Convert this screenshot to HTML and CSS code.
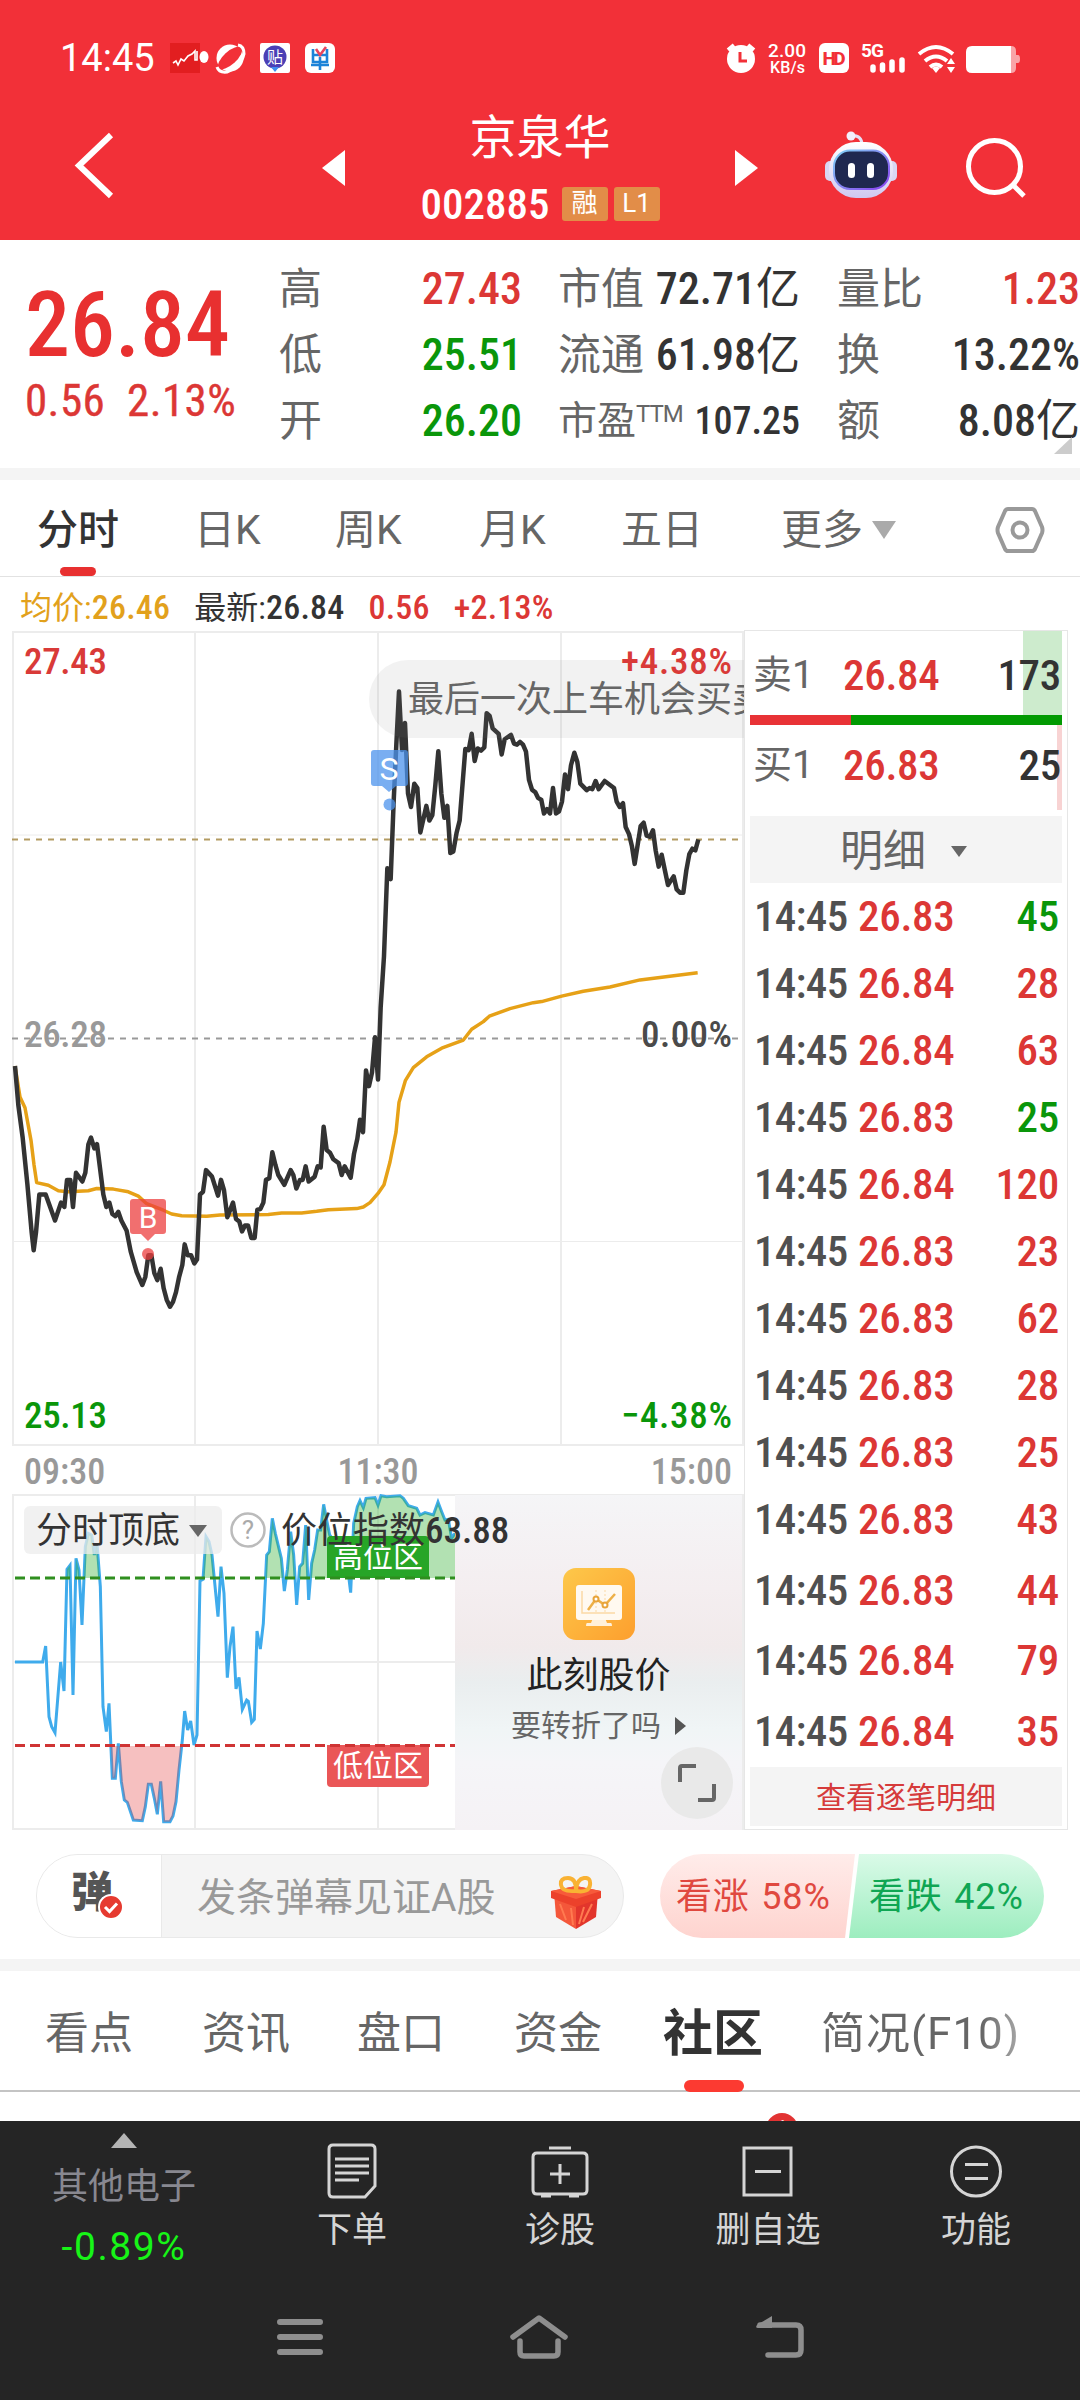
FILE: index.html
```html
<!DOCTYPE html>
<html lang="zh-CN">
<head>
    <meta charset="UTF-8">
    <meta name="viewport" content="width=device-width, initial-scale=1.0">
    <title>京泉华 002885</title>
    <link rel="stylesheet" href="styles.css">
</head>
<body>
    <header class="header">
        <div class="status-bar">
            <span class="clock">14:45</span>
            <svg class="status-left" width="166" height="32" viewBox="169 41 166 32">
                <rect x="170" y="42" width="30" height="30" fill="#e21e20"/>
                <path d="M173 62l3-2 2 4 3-6 3 2 4-5 4-2 3-3v9h2v-9" fill="none" stroke="#fff" stroke-width="1.6"/>
                <ellipse cx="204" cy="56" rx="4.500" ry="6" fill="#fff"/>
                <circle cx="230" cy="57" r="13.500" fill="#fff"/>
                <ellipse cx="230" cy="57" rx="15" ry="6.500" fill="#f23038" transform="rotate(-42 230 57)"/>
                <path d="M217 66q2 6 10 5q14-5 17-18q0-8-6-9" fill="none" stroke="#fff" stroke-width="3"/>
                <rect x="260" y="42" width="30" height="30" rx="2" fill="#fff"/>
                <circle cx="275" cy="56" r="11.500" fill="#4b3fb5"/>
                <path d="M271 66h8l-4 5z" fill="#3f8ef0"/>
                <text x="275" y="62" font-size="16" text-anchor="middle" fill="#fff">贴</text>
                <rect x="305" y="42" width="30" height="30" rx="6" fill="#fff"/>
                <g fill="none" stroke="#1c83d8" stroke-width="2.600">
                    <path d="M313 48v13h14v-13M320 56v13M311 64h18M313 54h14"/>
                    <path d="M316 48l4 6 6-8" stroke="#e8455d"/>
                </g>
            </svg>
            <svg class="status-right" width="296" height="34" viewBox="725 40 296 34">
                <circle cx="741" cy="58" r="14" fill="#fff"/>
                <path d="M728 49l6-5M754 49l-6-5" stroke="#fff" stroke-width="4" fill="none"/>
                <path d="M740 51v9h7" stroke="#f23038" stroke-width="3" fill="none"/>
                <text x="768" y="56" font-size="19" font-weight="500" textLength="38" fill="#fff">2.00</text>
                <text x="770" y="71.500" font-size="16" font-weight="500" textLength="35" fill="#fff">KB/s</text>
                <rect x="819" y="42" width="30" height="30" rx="6" fill="#fff"/>
                <text x="834" y="64" font-size="19" font-weight="800" text-anchor="middle" textLength="23" fill="#f23038">HD</text>
                <text x="861" y="56" font-size="19" font-weight="700" textLength="23" fill="#fff">5G</text>
                <path d="M873 66v3M882.500 64v5M892 61v8M902 59v10" stroke="#fff" stroke-width="5.500" stroke-linecap="round"/>
                <g fill="none" stroke="#fff" stroke-width="4">
                    <path d="M919 53q17-14 34 0"/>
                    <path d="M925 60q11-9 22 0"/>
                    <path d="M930 66q6-5 12 0"/>
                </g>
                <path d="M932 67q4-3 8 0l-4 5z" fill="#fff"/>
                <path d="M947 63l4-6 4 6zM947 66l4 6 4-6z" fill="#fff"/>
                <path d="M1008 45h3q5 0 5 5v4h2q2 0 2 4t-2 4h-2v5q0 5-5 5h-3z" fill="#f9a4a8"/>
                <path d="M972 45h39v27h-39q-6 0-6-6v-15q0-6 6-6z" fill="#fff"/>
            </svg>
        </div>
        <div class="title-bar">
            <svg class="back" width="44" height="72" viewBox="72 130 44 72"><path d="M111 135l-32 30.500 32 30.500" fill="none" stroke="#fff" stroke-width="6"/></svg>
            <svg class="prev" width="23" height="36" viewBox="0 0 23 36"><path d="M23 0v36l-23-18z" fill="#fff"/></svg>
            <div class="stock">
                <div class="stock-name">京泉华</div>
                <div class="stock-code">
                    <span class="num">002885</span>
                    <span class="badge">融</span>
                    <span class="badge">L1</span>
                </div>
            </div>
            <svg class="next" width="23" height="36" viewBox="0 0 23 36"><path d="M0 0v36l23-18z" fill="#fff"/></svg>
            <svg class="robot" width="74" height="70" viewBox="824 130 74 70">
                <defs>
                    <linearGradient id="head" x1="0" y1="0" x2="0" y2="1">
                        <stop offset="0" stop-color="#fff"/>
                        <stop offset="1" stop-color="#cfc8f0"/>
                    </linearGradient>
                    <linearGradient id="face" x1="0" y1="0" x2="1" y2="1">
                        <stop offset="0" stop-color="#7fd3f5"/>
                        <stop offset="1" stop-color="#8a3ff0"/>
                    </linearGradient>
                </defs>
                <path d="M851 136q9-2 11 7" fill="none" stroke="#e6e0f5" stroke-width="3"/>
                <circle cx="851" cy="136" r="4.500" fill="#f3effc"/>
                <rect x="825" y="161" width="12" height="20" rx="5" fill="#d9d6f3"/>
                <rect x="885" y="161" width="12" height="20" rx="5" fill="#d9d6f3"/>
                <rect x="829" y="142" width="64" height="56" rx="27" fill="url(#head)"/>
                <rect x="834" y="150.500" width="55" height="38.500" rx="16" fill="#1f2850" stroke="url(#face)" stroke-width="2"/>
                <rect x="848" y="163" width="7" height="15" rx="3.500" fill="#fff"/>
                <rect x="867" y="163" width="7" height="15" rx="3.500" fill="#fff"/>
            </svg>
            <svg class="search" width="62" height="62" viewBox="964 136 62 62"><g fill="none" stroke="#fff" stroke-width="5"><circle cx="994.500" cy="166.500" r="26"/><path d="M1013 185l11 11"/></g></svg>
        </div>
    </header>

    <section class="quote">
        <div class="quote-price red">
            <div class="big">26.84</div>
            <div class="change"><span>0.56</span><span>2.13%</span></div>
        </div>
        <dl class="quote-col col-a">
            <dt>高</dt><dd class="red">27.43</dd>
            <dt>低</dt><dd class="green">25.51</dd>
            <dt>开</dt><dd class="green">26.20</dd>
        </dl>
        <dl class="quote-col col-b">
            <dt>市值</dt><dd>72.71<i>亿</i></dd>
            <dt>流通</dt><dd>61.98<i>亿</i></dd>
            <dt class="small">市盈<sup>TTM</sup></dt><dd class="small">107.25</dd>
        </dl>
        <dl class="quote-col col-c">
            <dt>量比</dt><dd class="red">1.23</dd>
            <dt>换</dt><dd>13.22%</dd>
            <dt>额</dt><dd>8.08<i>亿</i></dd>
        </dl>
        <span class="corner"></span>
    </section>

    <nav class="period-tabs">
        <span class="active">分时</span>
        <span>日K</span>
        <span>周K</span>
        <span>月K</span>
        <span>五日</span>
        <span class="more">更多<i></i></span>
        <svg width="50" height="48" viewBox="0 0 50 48"><g fill="none" stroke="#999" stroke-width="4"><path d="M13 3h24q2 0 3 2l7 16q1 3 0 6l-7 16q-1 2-3 2h-24q-2 0-3-2l-7-16q-1-3 0-6l7-16q1-2 3-2z"/><circle cx="25" cy="24" r="7.500"/></g></svg>
    </nav>

    <main class="board">
        <div class="charts">
            <div class="legend">
                <span class="avg">均价:<b>26.46</b></span>
                <span>最新:<b>26.84</b></span>
                <b class="red">0.56</b>
                <b class="red">+2.13%</b>
            </div>

            <!-- minute price chart -->
            <svg class="price-chart" width="744" height="815" viewBox="0 631 744 815">
                <g fill="none" stroke="#ececec" stroke-width="2">
                    <rect x="13" y="632" width="730" height="813"/>
                    <path d="M195 632v813M378 632v813M561 632v813"/>
                    <path d="M13 835h730M13 1241.500h730" stroke-width="1"/>
                </g>
                <path d="M12 839.500h731" stroke="#b39b62" stroke-width="2" stroke-dasharray="6 6"/>
                <path d="M12 1038.500h731" stroke="#999" stroke-width="2" stroke-dasharray="6 6"/>
                <g transform="translate(0 620) scale(.33333 .542)" fill="none" stroke-linejoin="round">
                    <polyline vector-effect="non-scaling-stroke" stroke="#e6a117" stroke-width="3.500" points="45,823 60,880 75,900 93,960 102,1005 110,1038 145,1043 175,1053 205,1055 265,1053 290,1049 340,1050 385,1055 415,1063 440,1077 490,1089 515,1096 545,1099 620,1100 660,1098 805,1097 845,1094 905,1094 950,1091 985,1088 1070,1086 1090,1083 1110,1075 1134,1058 1152,1042 1170,1000 1188,945 1197,890 1216,850 1240,826 1280,806 1325,790 1390,775 1415,755 1450,741 1468,731 1530,717 1600,706 1625,704 1685,694 1750,685 1830,677 1920,664 2093,651"/>
                    <polyline vector-effect="non-scaling-stroke" stroke="#333" stroke-width="4.500" points="45,823 55,895 68,955 82,1040 95,1130 101,1163 108,1130 118,1060 137,1060 165,1108 183,1075 193,1083 201,1033 211,1033 219,1083 228,1020 247,1036 256,1020 265,968 273,955 283,975 291,967 310,1060 319,1083 328,1075 337,1096 346,1100 355,1092 364,1108 380,1127 392,1165 410,1203 427,1227 436,1212 445,1172 454,1172 463,1205 472,1218 482,1197 491,1233 500,1254 510,1267 519,1258 528,1240 537,1213 547,1190 554,1152 563,1172 573,1172 583,1187 591,1180 600,1060 609,1055 618,1015 636,1027 654,1062 663,1033 672,1052 682,1102 699,1075 708,1105 718,1110 726,1128 735,1117 744,1117 754,1140 764,1140 772,1088 781,1087 790,1075 798,1033 808,1030 817,982 826,1005 835,1024 853,1042 872,1015 880,1024 889,1049 900,1033 908,1033 917,1008 926,1036 944,1027 953,1008 962,1010 971,935 980,978 990,983 1000,995 1016,1002 1025,1024 1034,1008 1052,1029 1062,985 1072,957 1080,922 1089,945 1098,831 1107,860 1116,835 1125,770 1134,848 1142,715 1152,620 1162,458 1172,478 1181,335 1189,230 1197,132 1206,240 1215,190 1224,320 1233,345 1243,302 1252,310 1261,392 1279,343 1288,370 1297,360 1306,305 1315,242 1324,320 1333,365 1342,343 1351,430 1360,427 1370,392 1379,370 1388,300 1396,238 1406,240 1415,210 1424,260 1433,237 1443,241 1453,235 1460,172 1469,177 1478,200 1496,210 1505,248 1514,220 1533,212 1542,228 1551,230 1560,225 1569,230 1578,243 1587,295 1596,313 1606,318 1614,328 1624,332 1632,357 1641,349 1650,357 1659,310 1668,357 1677,353 1686,335 1695,285 1704,312 1713,268 1723,245 1732,262 1741,302 1760,314 1769,310 1777,312 1787,297 1796,312 1814,297 1842,310 1850,335 1859,345 1869,338 1877,382 1887,395 1896,418 1904,450 1913,415 1922,380 1931,374 1940,398 1950,400 1959,388 1967,425 1976,455 1985,433 1994,460 2004,489 2021,473 2030,497 2040,503 2050,503 2059,462 2068,432 2077,422 2086,425 2095,405"/>
                </g>
                <rect x="369" y="660" width="440" height="78" rx="39" fill="#808080" fill-opacity=".1"/>
                <text class="cjk" x="408" y="712" font-size="36" fill="#666">最后一次上车机会买卖</text>
                <g class="num" font-size="37">
                    <text x="24" y="674" textLength="83" fill="#d93a38">27.43</text>
                    <text x="24" y="1047" textLength="83" fill="#999">26.28</text>
                    <text x="24" y="1428" textLength="83" fill="#0a960a">25.13</text>
                    <text x="621" y="674" textLength="111" fill="#d93a38">+4.38%</text>
                    <text x="641" y="1047" textLength="91" fill="#4a4a4a">0.00%</text>
                    <text x="621" y="1428" textLength="111" fill="#0a960a">−4.38%</text>
                </g>
                <!-- trade markers -->
                <g fill="#4c93ec" fill-opacity=".75">
                    <path d="M374 750h31q3 0 3 3v30q0 3-3 3h-9l-7 6-7-6h-8q-3 0-3-3v-30q0-3 3-3z"/>
                    <circle cx="389.500" cy="804.500" r="6"/>
                </g>
                <g fill="#ec3f3f" fill-opacity=".75">
                    <path d="M133 1199h30q3 0 3 3v29q0 3-3 3h-8l-7 7-7-7h-8q-3 0-3-3v-29q0-3 3-3z"/>
                    <circle cx="148" cy="1254" r="6"/>
                </g>
                <text x="389" y="780" font-size="32" text-anchor="middle" fill="#fff">S</text>
                <text x="148" y="1228" font-size="30" text-anchor="middle" fill="#fff">B</text>
            </svg>

            <div class="time-axis num"><span>09:30</span><span>11:30</span><span>15:00</span></div>

            <div class="sub-row">
                <!-- top/bottom index chart -->
                <svg class="index-chart" width="455" height="336" viewBox="0 1494 455 336">
                    <defs>
                        <clipPath id="above"><rect x="0" y="0" width="1365" height="294"/></clipPath>
                        <clipPath id="below"><rect x="0" y="798" width="1365" height="300"/></clipPath>
                        <polyline id="idx" points="45,546 128,546 137,498 147,710 155,740 165,758 182,546 192,633 201,268 210,256 219,645 228,235 237,270 246,435 256,200 265,160 275,165 283,225 291,190 301,320 309,680 319,755 327,670 337,895 346,895 355,790 364,905 373,960 382,967 400,1020 427,1022 436,980 445,913 454,913 463,955 472,1003 482,904 491,1025 510,1025 519,1008 528,965 537,870 547,780 554,693 563,750 572,723 582,795 591,765 600,303 609,298 618,170 627,185 636,225 654,410 663,260 672,340 682,593 690,500 699,440 708,627 717,592 727,688 740,660 745,664 755,727 763,718 771,453 781,507 790,430 800,225 808,215 817,115 826,160 844,235 853,333 862,270 872,155 881,225 890,375 899,260 908,250 917,135 926,360 935,250 944,210 953,150 962,150 971,73 980,120 989,165 1000,180 1010,190 1024,260 1040,240 1052,338 1061,130 1072,80 1080,62 1090,83 1098,55 1125,53 1134,75 1143,47 1160,50 1200,47 1210,55 1225,77 1250,85 1260,105 1275,98 1300,105 1314,66 1325,95 1335,120 1345,118 1355,175 1365,160"/>
                    </defs>
                    <g fill="none" stroke="#ececec" stroke-width="2">
                        <path d="M455 1495h-442v334h442M195 1495v334M378 1495v334M13 1662h442"/>
                    </g>
                    <g transform="translate(0 1480) scale(.33333)">
                        <use href="#idx" fill="none" stroke="#3fabec" stroke-width="9"/>
                        <g clip-path="url(#above)" fill="#2fae2f" fill-opacity=".37">
                            <polygon points="192,633 201,268 210,256 219,645 228,235 237,270 246,435 256,200 265,160 275,165 283,225 291,190 301,320"/>
                            <polygon points="600,303 609,298 618,170 627,185 636,225 654,410 663,260 672,340"/>
                            <polygon points="790,430 800,225 808,215 817,115 826,160 844,235 853,333 862,270 872,155 881,225 890,375 899,260 908,250 917,135 926,360 935,250 944,210 953,150 962,150 971,73 980,120 989,165 1000,180 1010,190 1024,260 1040,240 1052,338 1061,130 1072,80 1080,62 1090,83 1098,55 1125,53 1134,75 1143,47 1160,50 1200,47 1210,55 1225,77 1250,85 1260,105 1275,98 1300,105 1314,66 1325,95 1335,120 1345,118 1355,175 1365,160 1365,430"/>
                        </g>
                        <g clip-path="url(#below)" fill="#e43c3c" fill-opacity=".32">
                            <polygon points="327,670 337,895 346,895 355,790 364,905 373,960 382,967 400,1020 427,1022 436,980 445,913 454,913 463,955 472,1003 482,904 491,1025 510,1025 519,1008 528,965 537,870 547,780 554,693"/>
                        </g>
                    </g>
                    <path d="M327 1578v-38q0-4 4-4h94q4 0 4 4v38z" fill="#27a527"/>
                    <path d="M327 1745v38q0 4 4 4h94q4 0 4-4v-38z" fill="#ea5657"/>
                    <path d="M15 1578h440" stroke="#2f8f1f" stroke-width="3" stroke-dasharray="10 5"/>
                    <path d="M15 1745.500h440" stroke="#cf3434" stroke-width="3" stroke-dasharray="10 5"/>
                    <g class="cjk" font-size="30" fill="#fff" text-anchor="middle">
                        <text x="378" y="1567">高位区</text>
                        <text x="378" y="1776">低位区</text>
                    </g>
                </svg>

                <div class="promo">
                    <svg width="72" height="72" viewBox="0 0 72 72">
                        <defs>
                            <linearGradient id="gold" x1="0" y1="0" x2="1" y2="1">
                                <stop offset="0" stop-color="#fdc84a"/>
                                <stop offset="1" stop-color="#fd9f2e"/>
                            </linearGradient>
                        </defs>
                        <rect width="72" height="72" rx="13" fill="url(#gold)"/>
                        <path d="M30 50h12l2 5h4q1 0 1 3h-26q0-3 1-3h4z" fill="#fff0d8"/>
                        <rect x="13" y="17" width="46" height="35" rx="3" fill="#fff9f0"/>
                        <path d="M19 23v22h33" fill="none" stroke="#fbd9a5" stroke-width="1.500"/>
                        <path d="M33 22v22M42 22v22" stroke="#fbd9a5" stroke-width="1" stroke-dasharray="2 2"/>
                        <path d="M25 42l8-11 9 6 10-11" fill="none" stroke="#edb048" stroke-width="2.500"/>
                        <circle cx="33" cy="31" r="2.500" fill="#fff" stroke="#e8a43a" stroke-width="2"/>
                        <circle cx="42" cy="37" r="2.500" fill="#fff" stroke="#e8a43a" stroke-width="2"/>
                    </svg>
                    <div class="promo-title">此刻股价</div>
                    <div class="promo-sub">要转折了吗<i></i></div>
                    <div class="expand">
                        <svg width="38" height="38" viewBox="0 0 38 38"><path d="M2 18v-14q0-2 2-2h14M36 20v14q0 2-2 2h-14" fill="none" stroke="#666" stroke-width="4"/></svg>
                    </div>
                </div>

                <div class="index-head">
                    <span class="chip">分时顶底<i></i></span>
                    <svg width="36" height="36" viewBox="0 0 36 36"><circle cx="18" cy="18" r="16.500" fill="none" stroke="#bbb" stroke-width="2.500"/><text x="18" y="27" font-size="26" text-anchor="middle" fill="#aaa">?</text></svg>
                    <span class="index-name">价位指数<b>63.88</b></span>
                </div>
            </div>
        </div>

        <aside class="depth">
            <div class="level ask"><span>卖1</span><b class="red">26.84</b><b>173</b></div>
            <div class="ratio"></div>
            <div class="level bid"><span>买1</span><b class="red">26.83</b><b>25</b></div>
            <div class="detail-head">明细<i></i></div>
            <ul class="ticks" id="ticks"></ul>
            <a class="all-ticks">查看逐笔明细</a>
        </aside>
    </main>

    <section class="danmu">
        <div class="danmu-input">
            <div class="danmu-switch">弹
                <svg width="26" height="26" viewBox="0 0 26 26"><circle cx="13" cy="13" r="12" fill="#e63a30" stroke="#fff" stroke-width="2"/><path d="M7 13l4.500 4.500 7.500-8" fill="none" stroke="#fff" stroke-width="3"/></svg>
            </div>
            <span class="placeholder">发条弹幕见证A股</span>
            <svg class="gift" width="50" height="54" viewBox="0 0 50 54">
                <path d="M3 16l22 8v29l-20-12z" fill="#f4573a"/>
                <path d="M47 16l-22 8v29l20-12z" fill="#e2352c"/>
                <path d="M0 15l25-5 25 5v7l-25 9-25-9z" fill="#ec412b"/>
                <path d="M0 15l25-5 25 5-25 8z" fill="#f75a3a"/>
                <path d="M9 28l6 16M20 32l2 17M41 28l-9 18M33 31l-5 17" stroke="#ff7a50" stroke-width="2"/>
                <path d="M24 15q-13 1-14-6t7-7 8 12q1-11 8-12t6 7-14 6z" fill="none" stroke="#f9b233" stroke-width="4"/>
            </svg>
        </div>
        <div class="vote">
            <span class="up">看涨 58%</span>
            <span class="down">看跌 42%</span>
        </div>
    </section>

    <nav class="info-tabs">
        <span>看点</span>
        <span>资讯</span>
        <span>盘口</span>
        <span>资金</span>
        <span class="active">社区</span>
        <span class="fade">简况(F10)</span>
    </nav>
    <div class="feed"><span class="dot">1</span></div>

    <footer class="footer">
        <div class="toolbar">
            <div class="sector">
                <i></i>
                <span>其他电子</span>
                <em>-0.89%</em>
            </div>
            <div class="tool">
                <svg width="60" height="58" viewBox="0 0 60 58"><g fill="none" stroke="#d5d5d5" stroke-width="3"><path d="M11 3h38q4 0 4 4v37l-10 11h-32q-4 0-4-4v-44q0-4 4-4z"/><path d="M13 17h34M13 24h34M13 31h34M13 38h24"/></g></svg>
                <span>下单</span>
            </div>
            <div class="tool">
                <svg width="60" height="58" viewBox="0 0 60 58"><g fill="none" stroke="#d5d5d5" stroke-width="3"><path d="M19 6h22M7 11h46q4 0 4 4v33q0 4-4 4h-46q-4 0-4-4v-33q0-4 4-4zM30 22v20M20 32h20M11 54h10M39 54h10"/></g></svg>
                <span>诊股</span>
            </div>
            <div class="tool">
                <svg width="60" height="58" viewBox="0 0 60 58"><g fill="none" stroke="#d5d5d5" stroke-width="3"><path d="M6 6h47v47h-47zM17 29.500h26"/></g></svg>
                <span>删自选</span>
            </div>
            <div class="tool">
                <svg width="60" height="58" viewBox="0 0 60 58"><g fill="none" stroke="#d5d5d5" stroke-width="3"><circle cx="30" cy="29.500" r="24.500"/><path d="M19 22.500h23M19 36.500h23"/></g></svg>
                <span>功能</span>
            </div>
        </div>
        <div class="sys-nav">
            <svg width="46" height="38" viewBox="0 0 46 38"><path d="M3 4h40M3 19h40M3 34h40" stroke="#8e8e8e" stroke-width="6" stroke-linecap="round"/></svg>
            <svg width="60" height="46" viewBox="0 0 60 46"><path d="M4 23l26-19 26 19M11 27v11q0 4 4 4h30q4 0 4-4v-11" fill="none" stroke="#8e8e8e" stroke-width="5.500" stroke-linecap="round" stroke-linejoin="round"/></svg>
            <svg width="50" height="44" viewBox="0 0 50 44"><path d="M17 1l-15 9q-2 3 1 3h14z" fill="#8e8e8e"/><path d="M5 10h36q5 0 5 5v20q0 5-5 5h-28" fill="none" stroke="#8e8e8e" stroke-width="5.500" stroke-linecap="round"/></svg>
        </div>
    </footer>

    <script>
        // [price, volume, side]
        const ticks = [
            ["26.83", 45, "green"],
            ["26.84", 28, "red"],
            ["26.84", 63, "red"],
            ["26.83", 25, "green"],
            ["26.84", 120, "red"],
            ["26.83", 23, "red"],
            ["26.83", 62, "red"],
            ["26.83", 28, "red"],
            ["26.83", 25, "red"],
            ["26.83", 43, "red"],
            ["26.83", 44, "red"],
            ["26.84", 79, "red"],
            ["26.84", 35, "red"]
        ];

        document.getElementById("ticks").innerHTML = ticks.map(([price, volume, side]) => `
            <li><span>14:45</span><b class="red">${price}</b><b class="${side}">${volume}</b></li>
        `).join("");
    </script>
</body>
</html>
```
FILE: styles.css
```css
* {
    box-sizing: border-box;
}
body {
    margin: 0;
    width: 1080px;
    height: 2400px;
    overflow: hidden;
    display: flex;
    flex-direction: column;
    background: #fff;
    color: #333;
    font-family: Roboto, "Noto Sans CJK SC", sans-serif;
    line-height: 1;
}
svg {
    display: block;
    flex: none;
}
b, .num, dd {
    font-family: "Roboto Condensed", Roboto, "Noto Sans CJK SC", sans-serif;
    font-weight: 500;
}
i, em {
    font-style: normal;
}
.cjk {
    font-family: "Noto Sans CJK SC", sans-serif;
}
.red {
    color: #dc3735;
}
.green {
    color: #0a960a;
}

/* header */
.header {
    height: 240px;
    flex: none;
    background: #f23038;
    color: #fff;
}
.status-bar {
    height: 114px;
    padding: 1px 59px 0 60px;
    display: flex;
    align-items: center;
}
.clock {
    width: 109px;
    font-size: 38px;
}
.status-right {
    margin-left: auto;
    overflow: visible;
}
.title-bar {
    height: 126px;
    display: flex;
    align-items: flex-start;
}
.back {
    margin: 16px 206px 0 72px;
}
.prev, .next {
    margin-top: 36px;
}
.stock {
    width: 390px;
    text-align: center;
}
.stock-name {
    font-size: 47px;
    line-height: 48px;
}
.stock-code {
    display: flex;
    justify-content: center;
    align-items: center;
    gap: 6px;
    height: 34px;
    margin-top: 25px;
    font-size: 43px;
}
.stock-code .num {
    margin-right: 6px;
}
.badge {
    width: 46px;
    height: 34px;
    line-height: 33px;
    border-radius: 3px;
    background: #e28d48;
    font-size: 26px;
}
.robot {
    margin: 16px 66px 0 66px;
}
.search {
    margin-top: 22px;
}

/* quote */
.quote {
    position: relative;
    height: 240px;
    flex: none;
    display: flex;
    padding: 16px 0 0 25px;
    border-bottom: 12px solid #f4f4f4;
}
.quote-price {
    width: 254px;
    flex: none;
    font-family: "Roboto Condensed", Roboto, sans-serif;
    font-weight: 500;
}
.big {
    margin-top: 25px;
    font-size: 90px;
    color: #e83030;
}
.change {
    display: flex;
    gap: 22px;
    margin-top: 7px;
    font-size: 45px;
    font-weight: 400;
    letter-spacing: .4px;
    -webkit-text-stroke: .4px;
}
.quote-col {
    flex: none;
    display: grid;
    grid-template-columns: auto 1fr;
    grid-auto-rows: 66px;
    align-items: center;
    margin: 0;
    font-size: 43px;
}
.quote-col dt {
    color: #666;
    white-space: nowrap;
}
.quote-col dd {
    margin: 0;
    text-align: right;
    white-space: nowrap;
    font-size: 44px;
}
.quote-col dd i {
    font-weight: 400;
    font-size: 44px;
}
.quote-col .small {
    font-size: 39px;
}
.quote-col dd.small {
    font-size: 38px;
}
.col-a {
    width: 243px;
}
.col-b {
    width: 242px;
    margin-left: 36px;
}
/* labels keep their own width so the TTM row does not push the values */
.col-b {
    grid-template-columns: 84px 1fr;
}
.col-c {
    width: 243px;
    margin-left: 37px;
}
.quote-col sup {
    font-size: 24px;
    letter-spacing: -1px;
    vertical-align: 12px;
    line-height: 0;
}
.corner {
    position: absolute;
    right: 8px;
    bottom: 14px;
    border: solid transparent;
    border-width: 0 0 17px 18px;
    border-bottom-color: #ccc;
}

/* period tabs */
.period-tabs {
    height: 97px;
    flex: none;
    display: grid;
    grid-template-columns: 157px 141px 144px 142px 160px 214px auto;
    align-items: center;
    padding: 4px 0 0 37px;
    border-bottom: 1px solid #e2e2e2;
    font-size: 41px;
    color: #666;
}
.period-tabs .active {
    position: relative;
    color: #333;
    font-weight: 500;
}
.period-tabs .active::after {
    content: "";
    position: absolute;
    left: 23px;
    top: 57px;
    width: 36px;
    height: 9px;
    border-radius: 5px;
    background: #e83030;
}
.more {
    display: flex;
    align-items: center;
    gap: 9px;
}
.more i {
    border: solid transparent;
    border-width: 18px 12px 0;
    border-top-color: #aaa;
}

/* charts */
.board {
    height: 1253px;
    flex: none;
    display: flex;
}
.charts {
    width: 744px;
    flex: none;
}
.legend {
    height: 54px;
    padding: 5px 0 0 20px;
    display: flex;
    align-items: center;
    gap: 24px;
    font-size: 32px;
}
.legend b {
    font-size: 34px;
    letter-spacing: .2px;
}
.avg {
    color: #e2a11c;
}
.price-chart, .index-chart {
    font-family: Roboto, "Noto Sans CJK SC", sans-serif;
}
.time-axis {
    height: 48px;
    padding: 4px 12px 0 24px;
    display: flex;
    align-items: center;
    justify-content: space-between;
    font-size: 36px;
    color: #999;
}
.sub-row {
    position: relative;
    display: flex;
    height: 336px;
}
.promo {
    position: relative;
    width: 289px;
    padding-top: 73px;
    display: flex;
    flex-direction: column;
    align-items: center;
    background: linear-gradient(180deg, #f5f5f7 0%, #f4eef0 28%, #f1eaeb 45%, #eaeeef 56%, #f0f5f6 70%, #f5f5f8 80%, #f5f2f5 100%);
    border: solid #ececec;
    border-width: 1px 2px 0 0;
}
.promo-title {
    margin-top: 18px;
    font-size: 36px;
    color: #222;
}
.promo-sub {
    display: flex;
    align-items: center;
    gap: 14px;
    margin-top: 17px;
    font-size: 30px;
    color: #666;
}
.promo-sub i {
    border: solid transparent;
    border-width: 9px 0 9px 11px;
    border-left-color: #555;
}
.expand {
    position: absolute;
    right: 9px;
    bottom: 11px;
    width: 72px;
    height: 72px;
    border-radius: 50%;
    background: #e9e9e9;
    display: flex;
    align-items: center;
    justify-content: center;
}
.index-head {
    position: absolute;
    left: 24px;
    top: 12px;
    display: flex;
    align-items: center;
}
.chip {
    display: flex;
    align-items: center;
    gap: 9px;
    width: 198px;
    height: 48px;
    margin-right: 8px;
    padding: 2px 0 0 12px;
    border-radius: 6px;
    background: rgba(236, 236, 236, .75);
    font-size: 36px;
}
.chip i {
    border: solid transparent;
    border-width: 12px 9px 0;
    border-top-color: #666;
}
.index-name {
    margin-left: 15px;
    font-size: 36px;
}
.index-name b {
    font-size: 37px;
}

/* depth */
.depth {
    width: 324px;
    height: 1200px;
    margin-top: 53px;
    border: 1px solid #e6e6e6;
    padding: 0 5px;
}
.level {
    display: grid;
    grid-template-columns: 90px auto 1fr;
    align-items: center;
    height: 85px;
    padding: 4px 1px 0 3px;
    font-size: 38px;
    color: #333;
}
.level span {
    color: #666;
    font-size: 39px;
    white-space: nowrap;
}
.level b {
    font-size: 43px;
    letter-spacing: -.3px;
}
.level b:last-child {
    text-align: right;
}
.ask {
    background: linear-gradient(#cdebcd, #cdebcd) right / 39px 100% no-repeat;
    height: 84px;
}
.ratio {
    height: 10px;
    background: linear-gradient(90deg, #e83236 101px, #029a02 101px);
}
.bid {
    background: linear-gradient(#f8d3d3, #f8d3d3) right / 5px 100% no-repeat;
    padding-bottom: 8px;
}
.detail-head {
    display: flex;
    align-items: center;
    justify-content: center;
    gap: 25px;
    height: 67px;
    margin-top: 6px;
    padding: 3px 5px 0 0;
    background: #f4f4f4;
    font-size: 43px;
    color: #666;
}
.detail-head i {
    border: solid transparent;
    border-width: 11px 8px 0;
    border-top-color: #666;
}
.ticks {
    list-style: none;
    margin: 0;
    padding: 0;
}
.ticks li {
    display: grid;
    grid-template-columns: 104px auto 1fr;
    align-items: center;
    height: 67px;
    padding: 0 3px 0 4px;
    font-size: 43px;
    letter-spacing: -.3px;
}
.ticks li:nth-child(n+11) {
    height: 71px;
}
.ticks li:nth-child(11) {
    height: 72px;
    padding-top: 3px;
}
.ticks span {
    font-family: "Roboto Condensed", Roboto, sans-serif;
    font-weight: 500;
    letter-spacing: -.7px;
    color: #505050;
}
.ticks b:last-child {
    text-align: right;
}
.all-ticks {
    display: block;
    height: 59px;
    line-height: 61px;
    background: #f4f4f4;
    text-align: center;
    font-size: 30px;
    color: #d63b3b;
}

/* comments */
.danmu {
    height: 141px;
    flex: none;
    display: flex;
    align-items: flex-start;
    padding: 24px 36px 0;
    border-bottom: 12px solid #f4f4f4;
}
.danmu-input {
    display: flex;
    align-items: center;
    width: 588px;
    height: 84px;
    border: 1px solid #e9e9e9;
    border-radius: 42px;
    background: #f4f4f4;
    overflow: hidden;
}
.danmu-switch {
    position: relative;
    width: 125px;
    height: 84px;
    padding-left: 34px;
    line-height: 78px;
    background: #fff;
    border-right: 1px solid #e9e9e9;
    font-size: 42px;
    font-weight: 900;
    color: #555;
}
.danmu-switch svg {
    position: absolute;
    left: 61px;
    top: 40px;
}
.placeholder {
    width: 353px;
    padding: 4px 0 0 35px;
    font-size: 39px;
    color: #999;
    white-space: nowrap;
}
.gift {
    margin: 13px 0 0 36px;
}
.vote {
    width: 384px;
    height: 84px;
    margin-left: 36px;
    display: flex;
    border-radius: 42px;
    overflow: hidden;
    font-size: 36px;
    letter-spacing: .8px;
    word-spacing: 2px;
    line-height: 86px;
}
.up {
    width: 195px;
    padding-left: 16px;
    background: linear-gradient(#ffecea, #fed4cf);
    clip-path: polygon(0 0, 100% 0, calc(100% - 10px) 100%, 0 100%);
    color: #e0483f;
}
.down {
    width: 195px;
    margin-left: -6px;
    padding-left: 20px;
    background: linear-gradient(#dafae8, #9dedbf);
    clip-path: polygon(10px 0, 100% 0, 100% 100%, 0 100%);
    color: #0fa653;
}

/* info tabs */
.info-tabs {
    height: 121px;
    flex: none;
    display: grid;
    grid-template-columns: 157px 155px 157px 149px 158px auto;
    align-items: center;
    padding: 6px 0 0 45px;
    border-bottom: 2px solid #c4c4c4;
    font-size: 44px;
    color: #666;
}
.info-tabs .active {
    position: relative;
    font-size: 50px;
    font-weight: 700;
    color: #333;
}
.info-tabs .active::after {
    content: "";
    position: absolute;
    left: 21px;
    top: 71px;
    width: 60px;
    height: 12px;
    border-radius: 6px;
    background: #fc3a31;
}
.fade {
    background: linear-gradient(90deg, #666 160px, #aaa 200px);
    background-clip: text;
    -webkit-background-clip: text;
    color: transparent;
    letter-spacing: 1px;
}
.feed {
    height: 29px;
    flex: none;
    padding: 21px 0 0 766px;
    overflow: hidden;
}
.dot {
    display: block;
    width: 32px;
    height: 32px;
    border-radius: 50%;
    background: #e23333;
    color: #fff;
    font-size: 22px;
    line-height: 32px;
    text-align: center;
}

/* footer */
.footer {
    flex: 1;
    background: #252525;
}
.toolbar {
    display: flex;
    height: 153px;
}
.sector {
    width: 248px;
    display: flex;
    flex-direction: column;
    align-items: center;
    padding-top: 12px;
    font-size: 36px;
    color: #888890;
}
.sector i {
    border: solid transparent;
    border-width: 0 13px 15px;
    border-bottom-color: #b5b5b5;
}
.sector span {
    margin-top: 21px;
}
.sector em {
    margin-top: 23px;
    font-size: 39px;
    letter-spacing: 1.6px;
    color: #17f517;
}
.tool {
    width: 208px;
    display: flex;
    flex-direction: column;
    align-items: center;
    padding-top: 21px;
    font-size: 35px;
    color: #d5d5d5;
}
.tool span {
    margin-top: 13px;
}
.sys-nav {
    display: flex;
    align-items: center;
    justify-content: space-between;
    height: 126px;
    padding: 0 275px 0 277px;
}
```
